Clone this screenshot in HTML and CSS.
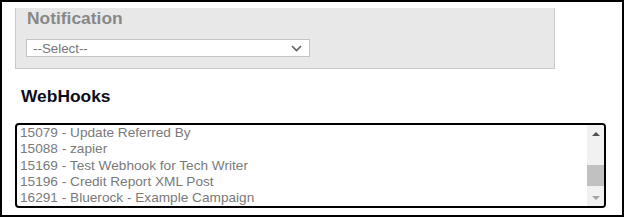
FILE: index.html
```html
<!DOCTYPE html>
<html>
<head>
<meta charset="utf-8">
<link rel="stylesheet" href="styles.css">
</head>
<body>
<div class="frame">
  <section class="panel">
    <h3 class="panel-title">Notification</h3>
    <div class="select">
      <span class="select-text">--Select--</span>
      <svg class="chevron" width="11" height="7" viewBox="0 0 11 7"><path d="M1 1 L5.5 5.5 L10 1" fill="none" stroke="#606060" stroke-width="1.6"/></svg>
    </div>
  </section>
  <h3 class="section-title">WebHooks</h3>
  <div class="listbox">
    <ul class="options">
      <li>15079 - Update Referred By</li>
      <li>15088 - zapier</li>
      <li>15169 - Test Webhook for Tech Writer</li>
      <li>15196 - Credit Report XML Post</li>
      <li>16291 - Bluerock - Example Campaign</li>
    </ul>
    <div class="scrollbar">
      <div class="sb-btn"><span class="arrow-up"></span></div>
      <div class="sb-track"><div class="sb-thumb"></div></div>
      <div class="sb-btn"><span class="arrow-down"></span></div>
    </div>
  </div>
</div>
</body>
</html>
```
FILE: styles.css
```css
* { box-sizing: border-box; }
html, body { margin: 0; padding: 0; background: #fff; }
body { font-family: "Liberation Sans", Arial, sans-serif; }

.frame {
  width: 624px;
  height: 217px;
  border: 2px solid #000;
  padding: 6px 0 0 13px;
  overflow: hidden;
  display: flex;
  flex-direction: column;
  align-items: flex-start;
}

.panel {
  width: 540px;
  height: 61px;
  background: #e8e8e8;
  border: 1px solid #cacaca;
  border-top: none;
  padding: 0 0 0 10px;
  flex: none;
}

.panel-title {
  margin: 0 0 0 1px;
  font-size: 17.4px;
  line-height: 20px;
  font-weight: bold;
  color: #888888;
}

.select {
  margin-top: 11px;
  width: 284px;
  height: 18px;
  background: #fff;
  border: 1px solid #c4c4c4;
  display: flex;
  align-items: center;
  justify-content: space-between;
  padding: 0 7px 0 6px;
}

.select-text {
  font-size: 13.33px;
  color: #767676;
  line-height: 15px;
}

.chevron { display: block; }

.section-title {
  margin: 17px 0 0 6px;
  font-size: 17.4px;
  line-height: 20px;
  font-weight: bold;
  color: #0d0d1a;
  flex: none;
}

.listbox {
  margin-top: 17px;
  width: 591px;
  height: 85px;
  border: 2px solid #000;
  border-radius: 4px;
  display: flex;
  overflow: hidden;
  flex: none;
}

.options {
  list-style: none;
  margin: 0;
  padding: 0 0 0 1px;
  flex: 1;
}

.options li {
  font-size: 13.65px;
  line-height: 15.33px;
  padding: 0 2px 1px 2px;
  color: #7a7a7a;
  white-space: nowrap;
}

.scrollbar {
  width: 17px;
  background: #f1f1f1;
  display: flex;
  flex-direction: column;
}

.sb-btn {
  height: 17px;
  display: flex;
  align-items: center;
  justify-content: center;
  flex: none;
}

.arrow-up {
  width: 0; height: 0;
  border-left: 4px solid transparent;
  border-right: 4px solid transparent;
  border-bottom: 4px solid #505050;
}

.arrow-down {
  width: 0; height: 0;
  border-left: 4px solid transparent;
  border-right: 4px solid transparent;
  border-top: 4px solid #a3a3a3;
}

.sb-track {
  flex: 1;
  display: flex;
  flex-direction: column;
  justify-content: flex-end;
  padding-bottom: 3px;
}

.sb-thumb {
  height: 21px;
  background: #c1c1c1;
}
```
